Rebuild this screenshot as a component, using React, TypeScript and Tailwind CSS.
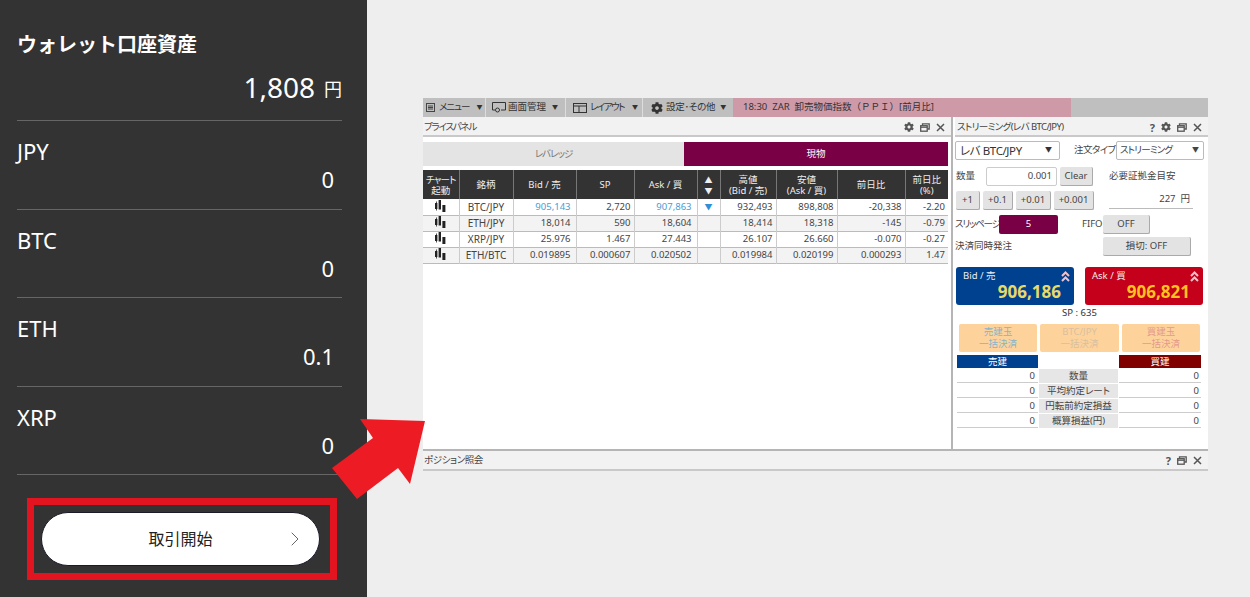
import { FaCog } from "react-icons/fa";
import { ChevronRight } from "lucide-react";

const ASSETS = [
  { name: "JPY", value: "0" },
  { name: "BTC", value: "0" },
  { name: "ETH", value: "0.1" },
  { name: "XRP", value: "0" },
];

const PRICES = [
  { pair: "BTC/JPY", bid: "905,143", sp: "2,720", ask: "907,863", down: true, high: "932,493", low: "898,808", diff: "-20,338", pct: "-2.20" },
  { pair: "ETH/JPY", bid: "18,014", sp: "590", ask: "18,604", high: "18,414", low: "18,318", diff: "-145", pct: "-0.79" },
  { pair: "XRP/JPY", bid: "25.976", sp: "1.467", ask: "27.443", high: "26.107", low: "26.660", diff: "-0.070", pct: "-0.27" },
  { pair: "ETH/BTC", bid: "0.019895", sp: "0.000607", ask: "0.020502", high: "0.019984", low: "0.020199", diff: "0.000293", pct: "1.47" },
];

const SUMMARY = ["数量", "平均約定レート", "円転前約定損益", "概算損益(円)"];

function RestoreIcon() {
  return (
    <svg width="10" height="9" viewBox="0 0 10 9" fill="none" stroke="#555" strokeWidth="1.3">
      <rect x="0.7" y="2.7" width="6.5" height="5.5" />
      <path d="M2.5 2.5V0.8H9.2V6H7.5" />
      <path d="M0.7 4.2H7.2" />
    </svg>
  );
}

function CloseIcon() {
  return (
    <svg width="9" height="9" viewBox="0 0 9 9" stroke="#555" strokeWidth="1.5">
      <path d="M1 1L8 8M8 1L1 8" />
    </svg>
  );
}

function CandleIcon() {
  return (
    <svg width="12" height="12" viewBox="0 0 12 12" fill="#222" className="mx-auto -mt-[2px] -translate-x-[1px]">
      <rect x="1" y="3" width="2.4" height="6" />
      <rect x="2" y="1.5" width="0.8" height="9" />
      <rect x="4.6" y="0" width="2.4" height="9.5" />
      <rect x="8.4" y="5" width="3" height="7" />
    </svg>
  );
}

function DoubleUp() {
  return (
    <svg width="9" height="11" viewBox="0 0 9 11" fill="none" stroke="#f2c0c8" strokeWidth="2" className="absolute right-[4px] top-[4px]">
      <path d="M1 5L4.5 1.5L8 5" />
      <path d="M1 10L4.5 6.5L8 10" />
    </svg>
  );
}

function PanelBar({ title, help, gear, className }: { title: string; help?: boolean; gear?: boolean; className: string }) {
  return (
    <div className={`flex h-[20px] items-center justify-between whitespace-nowrap border-b-2 border-[#c9c9c9] bg-[#f2f2f2] pr-[6px] text-[9.5px] text-[#444] ${className}`}>
      <span>{title}</span>
      <span className="flex items-center gap-[6px] tracking-normal">
        {help && <span className="text-[11px] font-bold leading-none text-[#555]">?</span>}
        {gear && <FaCog size={10} color="#555" />}
        <RestoreIcon />
        <CloseIcon />
      </span>
    </div>
  );
}

function GrayButton({ className, children }: { className: string; children: React.ReactNode }) {
  return (
    <div className={`flex items-center justify-center whitespace-nowrap rounded-[2px] border-b border-r border-[#aaa] bg-[#e3e3e3] text-[#444] ${className}`}>
      {children}
    </div>
  );
}

function Toolbar() {
  return (
    <div className="flex h-[19px] items-stretch whitespace-nowrap bg-[#bfbfbf] text-[9.5px] text-[#333]">
      <div className="flex w-[63px] items-center border-r border-[#ddd] pl-[3px]">
        <svg width="9" height="9" viewBox="0 0 9 9" fill="none" stroke="#444" className="mr-[4px]">
          <rect x="0.5" y="0.5" width="8" height="8" />
          <path d="M2 3H7M2 4.5H7M2 6H7" />
        </svg>
        <span className="tracking-[-1px]">メニュー</span>
        <span className="ml-[7px] text-[6px]">▼</span>
      </div>
      <div className="flex w-[80px] items-center border-r border-[#ddd] pl-[6px]">
        <svg width="14" height="11" viewBox="0 0 14 11" fill="none" stroke="#333" className="mr-[2px]">
          <path d="M3 8H0.5V0.5H13.5V8H9" />
          <circle cx="5.5" cy="8" r="2" />
        </svg>
        <span>画面管理</span>
        <span className="ml-[6px] text-[6px]">▼</span>
      </div>
      <div className="flex w-[77px] items-center border-r border-[#ddd] pl-[7px]">
        <svg width="14" height="10" viewBox="0 0 14 10" fill="none" stroke="#333" className="mr-[3px]">
          <rect x="0.5" y="0.5" width="13" height="9" />
          <path d="M0.5 3H13.5M6 3V9.5" />
        </svg>
        <span className="tracking-[-1.5px]">レイアウト</span>
        <span className="ml-[8px] text-[6px]">▼</span>
      </div>
      <div className="flex w-[90px] items-center pl-[8px]">
        <FaCog size={12} color="#333" className="mr-[3px]" />
        <span className="tracking-[-0.3px]">設定･その他</span>
        <span className="ml-[5px] text-[6px]">▼</span>
      </div>
      <div className="flex w-[338px] items-center bg-[#cf9aa8] pl-[10px] text-[#333]">
        18:30&nbsp; ZAR&nbsp; 卸売物価指数
        <span className="[font-feature-settings:normal]">（ＰＰＩ）</span>
        [前月比]
      </div>
    </div>
  );
}

function PricePanel() {
  const head = "border-r border-[#777] font-normal leading-[11px]";
  const cell = "border-r border-[#ccc] pr-[3px] text-right";
  const quote = "border-r border-[#ccc] pr-[5px] text-right";
  return (
    <div className="w-[528px] shrink-0 bg-white">
      <PanelBar title="プライスパネル" gear className="pl-[1px] pt-[2px] tracking-[-1.2px]" />
      <div className="mt-[5px] flex h-[24px] text-[9.5px]">
        <div className="flex w-[261px] items-center justify-center bg-[#e4e4e4] tracking-[-1px] text-[#777]">レバレッジ</div>
        <div className="flex w-[264px] items-center justify-center bg-[#7a0046] text-white">現物</div>
      </div>
      <table className="mt-[4px] w-[525px] table-fixed border-collapse whitespace-nowrap text-[9.5px] text-[#444]">
        <colgroup>
          <col className="w-[36px]" />
          <col className="w-[54px]" />
          <col className="w-[63px]" />
          <col className="w-[58px]" />
          <col className="w-[63px]" />
          <col className="w-[23px]" />
          <col className="w-[56px]" />
          <col className="w-[61px]" />
          <col className="w-[68px]" />
          <col className="w-[43px]" />
        </colgroup>
        <thead>
          <tr className="h-[29px] bg-[#333] text-center text-[#eee]">
            <th className={head}><span className="tracking-[-0.8px]">チャート</span><br />起動</th>
            <th className={head}>銘柄</th>
            <th className={head}>Bid / 売</th>
            <th className={head}>SP</th>
            <th className={head}>Ask / 買</th>
            <th className={`${head} text-[8px]`}>▲<br />▼</th>
            <th className={head}>高値<br />(Bid / 売)</th>
            <th className={head}>安値<br />(Ask / 買)</th>
            <th className={head}>前日比</th>
            <th className="font-normal leading-[11px]">前日比<br />(%)</th>
          </tr>
        </thead>
        <tbody>
          {PRICES.map((p, i) => (
            <tr key={p.pair} className={`h-[16px] border-b border-[#bbb] leading-none ${i % 2 ? "bg-[#f3f3f3]" : "bg-white"}`}>
              <td className="border-r border-[#ccc]"><CandleIcon /></td>
              <td className="border-r border-[#ccc] text-center text-[10px]">{p.pair}</td>
              <td className={`${quote} ${p.down ? "text-[#4a9bd4]" : ""}`}>{p.bid}</td>
              <td className={cell}>{p.sp}</td>
              <td className={`${quote} ${p.down ? "text-[#4a9bd4]" : ""}`}>{p.ask}</td>
              <td className="border-r border-[#ccc] text-center text-[8px] text-[#2f8fd8]">{p.down ? "▼" : ""}</td>
              <td className={cell}>{p.high}</td>
              <td className={cell}>{p.low}</td>
              <td className={cell}>{p.diff}</td>
              <td className="pr-[3px] text-right">{p.pct}</td>
            </tr>
          ))}
        </tbody>
      </table>
    </div>
  );
}

function RateBox({ label, rate, className, rateClass }: { label: string; rate: string; className: string; rateClass: string }) {
  return (
    <div className={`relative h-[38px] w-[118px] rounded-[3px] pl-[7px] pt-[3px] text-[9.5px] leading-[11px] text-[#eee] ${className}`}>
      <div>{label}</div>
      <div className={`mt-[2px] pr-[13px] text-right text-[17px] font-bold leading-[18px] ${rateClass}`}>{rate}</div>
      <DoubleUp />
    </div>
  );
}

function StreamingPanel() {
  return (
    <div className="min-w-0 flex-1 border-l-2 border-[#b5b5b5] bg-white">
      <div className="pl-[2px]">
        <PanelBar title="ストリーミング(レバ BTC/JPY)" help gear className="pl-[2px] pt-[2px] tracking-[-0.6px]" />
      </div>
      <div className="whitespace-nowrap pl-[2px] pr-[4px] text-[9.5px] text-[#444]">
        <div className="mt-[4px] flex items-center">
          <div className="flex h-[19px] w-[105px] items-center justify-between rounded-[2px] border border-[#bbb] px-[4px] text-[11.5px] text-[#333]">
            <span className="tracking-[-0.4px]">レバ BTC/JPY</span> <span className="pr-[3px] text-[7px]">▼</span>
          </div>
          <span className="ml-[14px] w-[42px] tracking-[-0.5px]">注文タイプ</span>
          <div className="flex h-[19px] w-[88px] items-center justify-between rounded-[2px] border border-[#bbb] px-[3px]">
            <span className="tracking-[-0.8px]">ストリーミング</span> <span className="pr-[1px] text-[7px]">▼</span>
          </div>
        </div>
        <div className="mt-[7px] flex h-[19px] items-center pl-[1px]">
          <span className="w-[30px]">数量</span>
          <div className="flex h-[19px] w-[71px] items-center justify-end rounded-[2px] border border-[#ccc] pr-[4px]">0.001</div>
          <GrayButton className="ml-[3px] h-[19px] w-[33px]">Clear</GrayButton>
          <span className="ml-[16px]">必要証拠金目安</span>
        </div>
        <div className="mt-[5px] flex h-[19px] items-stretch gap-[3px] pl-[1px]">
          <GrayButton className="w-[24px]">+1</GrayButton>
          <GrayButton className="w-[30px]">+0.1</GrayButton>
          <GrayButton className="w-[35px]">+0.01</GrayButton>
          <GrayButton className="w-[40px]">+0.001</GrayButton>
          <div className="ml-[12px] flex h-[18px] w-[84px] items-center justify-end border-b border-[#bbb] pr-[3px]">227&nbsp; 円</div>
        </div>
        <div className="mt-[5px] flex h-[19px] items-center">
          <span className="w-[44px] tracking-[-1.2px]">スリッページ</span>
          <div className="flex h-[19px] w-[59px] items-center justify-center rounded-[2px] bg-[#7a0046] text-white">5</div>
          <span className="ml-[24px] w-[21px]">FIFO</span>
          <GrayButton className="h-[19px] w-[47px]">OFF</GrayButton>
        </div>
        <div className="mt-[3px] flex h-[19px] items-center">
          <span className="w-[148px]">決済同時発注</span>
          <GrayButton className="h-[19px] w-[88px]">損切: OFF</GrayButton>
        </div>
        <div className="mt-[11px] flex justify-between pl-[1px] pr-px">
          <RateBox label="Bid / 売" rate="906,186" className="bg-[#00418f]" rateClass="text-[#e8d96a]" />
          <RateBox label="Ask / 買" rate="906,821" className="bg-[#c4001a]" rateClass="text-[#ffc21f]" />
        </div>
        <div className="mt-[1px] h-[14px] text-center leading-[14px] text-[#333]">SP : 635</div>
        <div className="mt-[4px] flex gap-[3px] pl-[4px] text-center leading-[12px]">
          <div className="h-[28px] w-[78px] rounded-[2px] bg-[#fdd39b] pt-[2px] text-[#8ab4c8]">売建玉<br />一括決済</div>
          <div className="h-[28px] w-[79px] rounded-[2px] bg-[#fdd39b] pt-[2px] text-[#d9bfa0]">BTC/JPY<br />一括決済</div>
          <div className="h-[28px] w-[78px] rounded-[2px] bg-[#fdd39b] pt-[2px] text-[#e39a8c]">買建玉<br />一括決済</div>
        </div>
        <div className="mt-[3px] grid grid-cols-[81px_81px_82px] pl-[2px] text-center leading-[13px]">
          <div className="h-[13px] bg-[#00418f] text-white">売建</div>
          <div />
          <div className="h-[13px] bg-[#800000] text-white">買建</div>
          {SUMMARY.map((label) => (
            <div key={label} className="contents">
              <div className="mt-px border-b border-[#ccc] pr-[3px] text-right">0</div>
              <div className="mx-px mt-px bg-[#e6e6e6]">{label}</div>
              <div className="mt-px border-b border-[#ccc] pr-[2px] text-right">0</div>
            </div>
          ))}
        </div>
      </div>
    </div>
  );
}

export default function App() {
  return (
    <div className="relative flex h-[597px] w-[1250px] overflow-hidden bg-[#eeeeee] font-['Noto_Sans','Noto_Sans_CJK_JP',sans-serif]">
      <aside className="flex w-[367px] shrink-0 flex-col bg-[#333333] pl-[17px] pr-[25px] pt-[30px] text-white">
        <div className="text-[20px] font-bold leading-[30px]">ウォレット口座資産</div>
        <div className="flex h-[61px] items-start justify-end border-b border-[#666] pt-[9px] leading-[36px]">
          <span className="text-[28px]">1,808</span>
          <span className="ml-[9px] pt-[2px] text-[18px]">円</span>
        </div>
        {ASSETS.map((a) => (
          <div key={a.name} className="h-[88.5px] border-b border-[#666] pt-[16px]">
            <div className="text-[22px] leading-[28px]">{a.name}</div>
            <div className="pr-[8px] text-right text-[22px] leading-[28px]">{a.value}</div>
          </div>
        ))}
        <div className="ml-[10px] mt-[23px] h-[82px] w-[310px] border-[7px] border-[#e1141f] p-[7px]">
          <div className="relative flex h-[54px] w-[279px] items-center justify-center rounded-full border border-[#1a1a2a] bg-white text-[16px] text-[#222]">
            取引開始
            <ChevronRight size={24} strokeWidth={1} color="#666" className="absolute right-[12px] top-[14px]" />
          </div>
        </div>
      </aside>
      <main className="min-w-0 flex-1 pl-[56px] pr-[42px] pt-[98px] [font-feature-settings:'palt']">
        <Toolbar />
        <div className="flex h-[332px] bg-white">
          <PricePanel />
          <StreamingPanel />
        </div>
        <div className="border-t-2 border-[#b5b5b5]">
          <PanelBar title="ポジション照会" help className="pl-[1px] tracking-[-0.4px]" />
        </div>
      </main>
      <svg width="100" height="85" viewBox="332 418 100 85" className="absolute left-[332px] top-[418px]">
        <polygon points="360,419 425,421 410,484 398,468 357,499 332,468 373,438" fill="#ed1c24" />
      </svg>
    </div>
  );
}
